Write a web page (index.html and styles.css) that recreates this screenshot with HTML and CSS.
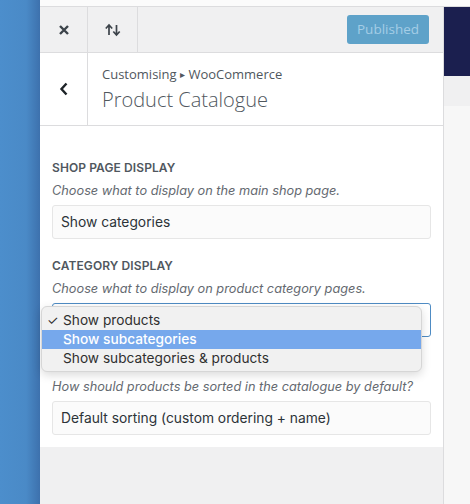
FILE: index.html
```html
<!DOCTYPE html>
<html>
<head>
<meta charset="utf-8">
<link rel="stylesheet" href="styles.css">
</head>
<body>
<div class="desk"></div>
<div class="main">
  <div class="topstrip"></div>
  <div class="row">
    <div class="panel">
      <div class="header">
        <button class="iconbtn">
          <svg width="12" height="12" viewBox="0 0 12 12"><path d="M2 2 L10 10 M10 2 L2 10" stroke="#3c434a" stroke-width="2.4" stroke-linecap="butt"/></svg>
        </button>
        <button class="iconbtn">
          <svg width="18" height="14" viewBox="0 0 18 14"><path d="M5 12 V2.5 M1.8 5.5 L5 2 L8.2 5.5" stroke="#3c434a" stroke-width="1.7" fill="none"/><path d="M12.5 2 V11.5 M9.3 8.5 L12.5 12 L15.7 8.5" stroke="#3c434a" stroke-width="1.7" fill="none"/></svg>
        </button>
        <div class="spacer"></div>
        <div class="publish">Published</div>
      </div>
      <div class="titlebar">
        <button class="iconbtn back">
          <svg width="10" height="14" viewBox="0 0 10 14"><path d="M7.5 1.5 L2.5 7 L7.5 12.5" stroke="#1d2327" stroke-width="2.4" fill="none"/></svg>
        </button>
        <div class="titles">
          <div class="crumb">Customising <span class="tri">&#9656;</span> WooCommerce</div>
          <div class="title">Product Catalogue</div>
        </div>
      </div>
      <div class="content">
        <div class="control">
          <div class="label">Shop page display</div>
          <div class="desc">Choose what to display on the main shop page.</div>
          <div class="select">Show categories</div>
        </div>
        <div class="control">
          <div class="label">Category display</div>
          <div class="desc">Choose what to display on product category pages.</div>
          <div class="select focus"></div>
          <ul class="menu">
            <li><span class="check">&#10003;</span>Show products</li>
            <li class="hl">Show subcategories</li>
            <li>Show subcategories &amp; products</li>
          </ul>
        </div>
        <div class="control">
          <div class="label covered">Default product sorting</div>
          <div class="desc">How should products be sorted in the catalogue by default?</div>
          <div class="select">Default sorting (custom ordering + name)</div>
        </div>
      </div>
      <div class="fill"></div>
    </div>
    <div class="preview">
      <div class="navy"></div>
      <div class="band"></div>
    </div>
  </div>
</div>
</body>
</html>
```
FILE: styles.css
```css
* { box-sizing: border-box; }
html, body { margin: 0; padding: 0; }
body {
  width: 470px;
  height: 504px;
  overflow: hidden;
  display: flex;
  font-family: Inter, "Liberation Sans", sans-serif;
  background: #f7f7f7;
}
.desk {
  width: 40px;
  flex: none;
  background: linear-gradient(to right, #4c8ecc 0, #4a8ac7 65%, #3d71ad 100%);
}
.main {
  flex: 1;
  display: flex;
  flex-direction: column;
}
.topstrip {
  height: 7px;
  background: #fbfbfb;
  border-bottom: 1px solid #dcdcde;
  flex: none;
}
.row {
  flex: 1;
  display: flex;
}
.panel {
  width: 404px;
  flex: none;
  border-right: 1px solid #dcdcde;
  display: flex;
  flex-direction: column;
  background: #f0f0f1;
}
.header {
  height: 46px;
  display: flex;
  align-items: center;
  background: #f0f0f1;
  border-bottom: 1px solid #dcdcde;
}
.iconbtn {
  width: 48px;
  height: 100%;
  border: 0;
  border-right: 1px solid #dcdcde;
  background: transparent;
  display: flex;
  align-items: center;
  justify-content: center;
  padding: 0;
  flex: none;
}
.header .iconbtn:nth-child(2) { width: 50px; }
.spacer { flex: 1; }
.publish {
  width: 82px;
  height: 29px;
  margin-right: 14px;
  margin-top: -1px;
  background: #5ea2c9;
  border-radius: 3px;
  color: #a4cde6;
  font-family: "Open Sans", sans-serif;
  font-size: 13.5px;
  display: flex;
  align-items: center;
  justify-content: center;
}
.titlebar {
  height: 73px;
  background: #fff;
  border-bottom: 1px solid #dcdcde;
  display: flex;
}
.back { background: #fff; }
.titles {
  padding-left: 14px;
  padding-top: 12px;
  font-family: "Open Sans", sans-serif;
  color: #50575e;
}
.crumb {
  font-size: 13px;
  line-height: 18px;
}
.tri { font-size: 10px; position: relative; top: -1px; }
.title {
  font-size: 20px;
  font-weight: 300;
  line-height: 28px;
  margin-top: 2px;
  color: #50575e;
}
.content {
  background: #fff;
  padding: 33px 12px 12px;
  display: flex;
  flex-direction: column;
  gap: 18px;
}
.control {
  display: flex;
  flex-direction: column;
  gap: 5px;
  position: relative;
}
.label {
  font-size: 12px;
  font-weight: 600;
  text-transform: uppercase;
  color: #50575e;
  line-height: 18px;
  letter-spacing: 0.1px;
}
.label.covered { visibility: hidden; }
.desc {
  font-size: 12.75px;
  font-style: italic;
  color: #646970;
  line-height: 18px;
}
.select {
  height: 34px;
  border: 1px solid #e6e6e6;
  border-radius: 3px;
  background: #fbfbfb;
  font-size: 13.8px;
  color: #2c3338;
  padding: 0 8px;
  display: flex;
  align-items: center;
}
.select.focus {
  border-color: #4f8cc4;
  background: #fff;
}
.menu {
  position: absolute;
  left: -11px;
  top: 49px;
  width: 381px;
  margin: 0;
  padding: 4px 0 3px;
  list-style: none;
  background: #f1f1f1;
  border: 1px solid #d6d6d6;
  border-radius: 6px;
  box-shadow: 0 3px 10px rgba(0,0,0,0.15);
  z-index: 5;
}
.menu li {
  height: 19px;
  line-height: 19px;
  font-size: 13.7px;
  color: #2f2f2f;
  padding-left: 21px;
  position: relative;
}
.menu li.hl {
  background: #76a8ec;
  color: #fff;
  font-weight: 500;
}
.check {
  position: absolute;
  left: 5px;
  top: 0;
  font-size: 13px;
}
.fill { flex: 1; background: #f0f0f1; }
.preview {
  flex: 1;
  display: flex;
  flex-direction: column;
  background: #f7f7f7;
}
.navy { height: 69px; background: #1b1f4f; }
.band { height: 30px; background: #f0f0f1; }
```
